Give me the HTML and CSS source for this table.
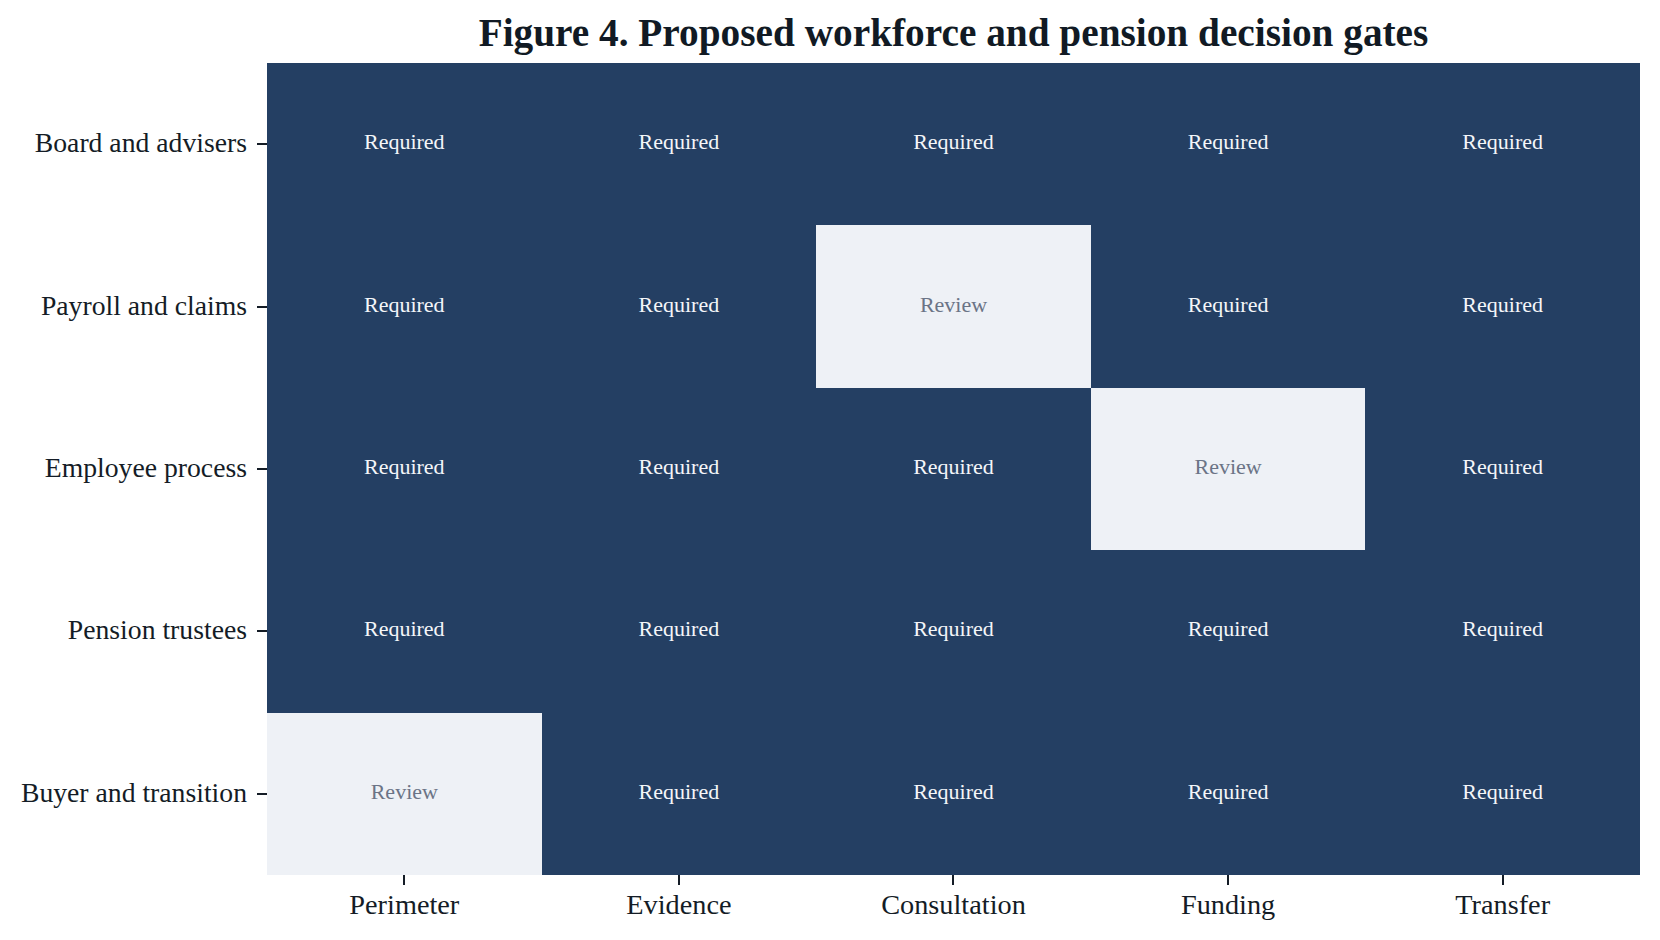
FILE: index.html
```html
<!DOCTYPE html>
<html lang="en">
<head>
<meta charset="utf-8">
<title>Figure 4</title>
<link rel="stylesheet" href="styles.css">
</head>
<body>
<div class="figure">
  <div class="title-wrap">
    <h1 class="title">Figure 4. Proposed workforce and pension decision gates</h1>
  </div>
  <div class="plot">
    <div class="ylabels">
      <div class="ylabel"><span>Board and advisers</span><i class="ytick"></i></div>
      <div class="ylabel"><span>Payroll and claims</span><i class="ytick"></i></div>
      <div class="ylabel"><span>Employee process</span><i class="ytick"></i></div>
      <div class="ylabel"><span>Pension trustees</span><i class="ytick"></i></div>
      <div class="ylabel"><span>Buyer and transition</span><i class="ytick"></i></div>
    </div>
    <div class="heatmap">
      <div class="cell req">Required</div>
      <div class="cell req">Required</div>
      <div class="cell req">Required</div>
      <div class="cell req">Required</div>
      <div class="cell req">Required</div>

      <div class="cell req">Required</div>
      <div class="cell req">Required</div>
      <div class="cell rev">Review</div>
      <div class="cell req">Required</div>
      <div class="cell req">Required</div>

      <div class="cell req">Required</div>
      <div class="cell req">Required</div>
      <div class="cell req">Required</div>
      <div class="cell rev">Review</div>
      <div class="cell req">Required</div>

      <div class="cell req">Required</div>
      <div class="cell req">Required</div>
      <div class="cell req">Required</div>
      <div class="cell req">Required</div>
      <div class="cell req">Required</div>

      <div class="cell rev">Review</div>
      <div class="cell req">Required</div>
      <div class="cell req">Required</div>
      <div class="cell req">Required</div>
      <div class="cell req">Required</div>
    </div>
    <div class="corner"></div>
    <div class="xlabels">
      <div class="xlabel"><i class="xtick"></i><span>Perimeter</span></div>
      <div class="xlabel"><i class="xtick"></i><span>Evidence</span></div>
      <div class="xlabel"><i class="xtick"></i><span>Consultation</span></div>
      <div class="xlabel"><i class="xtick"></i><span>Funding</span></div>
      <div class="xlabel"><i class="xtick"></i><span>Transfer</span></div>
    </div>
  </div>
</div>
</body>
</html>
```
FILE: styles.css
```css
* { box-sizing: border-box; }

html, body {
  margin: 0;
  padding: 0;
  background: #ffffff;
}

body {
  font-family: "Liberation Serif", "Times New Roman", serif;
  color: #141c26;
}

.figure {
  width: 1660px;
  height: 940px;
  overflow: hidden;
}

.title-wrap {
  height: 63px;
  padding-top: 14px;
  padding-left: 267px;
  width: 1640px;
}

.title {
  margin: 0;
  font-size: 39.3px;
  line-height: 39px;
  font-weight: bold;
  text-align: center;
  color: #111a24;
  white-space: nowrap;
}

.plot {
  display: grid;
  grid-template-columns: 267px 1373px;
  grid-template-rows: 812px auto;
}

.ylabels {
  display: grid;
  grid-template-rows: repeat(5, 1fr);
}

.ylabel {
  display: flex;
  justify-content: flex-end;
  align-items: center;
  gap: 10px;
  font-size: 27.7px;
  line-height: 28px;
  white-space: nowrap;
}

.ylabel span {
  padding-bottom: 2px;
}

.ytick {
  display: block;
  width: 10px;
  height: 2px;
  background: #141c26;
}

.heatmap {
  display: grid;
  grid-template-columns: repeat(5, 1fr);
  grid-template-rows: repeat(5, 1fr);
}

.cell {
  display: flex;
  align-items: center;
  justify-content: center;
  font-size: 22px;
  line-height: 22px;
  padding-bottom: 4px;
}

.req {
  background: #243f63;
  color: #f4f6f9;
}

.rev {
  background: #eef1f6;
  color: #6b7486;
}

.xlabels {
  display: grid;
  grid-template-columns: repeat(5, 1fr);
}

.xlabel {
  display: flex;
  flex-direction: column;
  align-items: center;
  font-size: 28.3px;
  line-height: 28px;
  white-space: nowrap;
}

.xtick {
  display: block;
  width: 2px;
  height: 10px;
  background: #141c26;
  margin-bottom: 6px;
}
```
